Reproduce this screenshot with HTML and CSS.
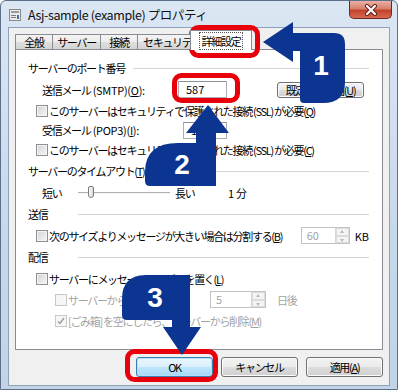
FILE: index.html
```html
<!DOCTYPE html>
<html lang="ja">
<head>
    <meta charset="UTF-8">
    <meta name="viewport" content="width=device-width, initial-scale=1.0">
    <title>Asj-sample (example) プロパティ</title>
    <link rel="stylesheet" href="styles.css">
</head>
<body>
    <div class="window">
        <div class="titlebar">
            <svg class="app-icon" width="14" height="14" viewBox="0 0 14 14">
                <rect x="1.5" y="1.5" width="11" height="11" fill="#e9e9e9" stroke="#8a8a8a"/>
                <rect x="3" y="3" width="8" height="2" fill="#9a9a9a"/>
                <rect x="3" y="7" width="5" height="1" fill="#7a7a7a"/>
                <rect x="3" y="9" width="5" height="1" fill="#7a7a7a"/>
                <rect x="9" y="7" width="2" height="4" fill="#4d6f96"/>
            </svg>
            <span class="title">Asj-sample (example) プロパティ</span>
            <div class="close">
                <svg width="14" height="12" viewBox="0 0 14 12">
                    <path d="M3 2 L11 10 M11 2 L3 10" stroke="#5a1c14" stroke-width="4" stroke-linecap="round"/>
                    <path d="M3 2 L11 10 M11 2 L3 10" stroke="#fff" stroke-width="2.2" stroke-linecap="round"/>
                </svg>
            </div>
        </div>

        <div class="client">
            <div class="tabs">
                <div class="tab w-general">全般</div>
                <div class="tab w-server">サーバー</div>
                <div class="tab w-conn">接続</div>
                <div class="tab w-sec">セキュリティ</div>
                <div class="tab active"><span class="focus">詳細設定</span></div>
            </div>

            <div class="panel">
                <div class="group-title"><span>サーバーのポート番号</span></div>
                <div class="row indent">
                    <span class="smtp-label">送信メール<span class="lat"> (SMTP)(<u>O</u>):</span></span>
                    <span class="textbox smtp">587</span>
                    <span class="btn small">既定値を使用(<u>U</u>)</span>
                </div>
                <div class="row check-row">
                    <span class="check"></span>
                    <span>このサーバーはセキュリティで保護された接続 (SSL) が必要(<u>Q</u>)</span>
                </div>
                <div class="row short indent">
                    <span class="pop-label">受信メール<span class="lat"> (POP3)(<u>I</u>):</span></span>
                    <span class="textbox pop">110</span>
                </div>
                <div class="row check-row">
                    <span class="check"></span>
                    <span>このサーバーはセキュリティで保護された接続 (SSL) が必要(<u>C</u>)</span>
                </div>

                <div class="group-title"><span>サーバーのタイムアウト(<u>T</u>)</span></div>
                <div class="row indent">
                    <span class="short-label">短い</span>
                    <div class="slider"><span class="thumb"></span></div>
                    <span class="long-label">長い</span>
                    <span><span class="lat">1 </span>分</span>
                </div>

                <div class="group-title"><span>送信</span></div>
                <div class="row check-row">
                    <span class="check"></span>
                    <span>次のサイズよりメッセージが大きい場合は分割する(<u>B</u>)</span>
                    <div class="spin split">
                        <span class="spin-value">60</span>
                        <span class="spin-btns"><i class="up"></i><i class="down"></i></span>
                    </div>
                    <span class="unit">KB</span>
                </div>

                <div class="group-title"><span>配信</span></div>
                <div class="row check-row">
                    <span class="check"></span>
                    <span>サーバーにメッセージのコピーを置く(<u>L</u>)</span>
                </div>
                <div class="row sub disabled">
                    <span class="check"></span>
                    <span class="delete-label">サーバーから削除する(<u>R</u>)</span>
                    <div class="spin days">
                        <span class="spin-value">5</span>
                        <span class="spin-btns"><i class="up"></i><i class="down"></i></span>
                    </div>
                    <span class="days-label">日後</span>
                </div>
                <div class="row sub disabled">
                    <span class="check checked">
                        <svg width="8" height="8" viewBox="0 0 8 8"><path d="M1 4.5 L3 6.5 L7 1" fill="none" stroke="#9c9c9c" stroke-width="1.4"/></svg>
                    </span>
                    <span>[ごみ箱] を空にしたら、サーバーから削除(<u>M</u>)</span>
                </div>
            </div>

            <div class="actions">
                <span class="btn default">OK</span>
                <span class="btn">キャンセル</span>
                <span class="btn">適用(<u>A</u>)</span>
            </div>
        </div>

        <svg class="callouts" width="398" height="390" viewBox="0 0 398 390">
            <g fill="none" stroke="#e8000b" stroke-width="5">
                <rect x="191.5" y="27.5" width="66" height="28" rx="7"/>
                <rect x="174.5" y="75.5" width="63" height="25" rx="7"/>
                <rect x="127.5" y="351.5" width="88" height="28" rx="7"/>
            </g>
            <g fill="#0b3590">
                <path d="M263 42 L293 22 L293 33 L334 33 Q345 33 345 44 L345 82 Q345 103 323 103 L304 103 Q300 103 300 99 L300 51 L293 51 L293 62 Z"/>
                <path d="M208 105 L229 133 L216 133 L216 186 L150 186 Q145 186 145 181 L145 172 Q145 143 178 143 L196 143 L196 133 L186 133 Z"/>
                <path d="M182 355 L163 327 L172 327 L172 320 L127 320 Q122 320 122 315 L122 299 Q122 275 146 275 L190 275 L190 327 L201 327 Z"/>
            </g>
            <g class="num" fill="#fff" text-anchor="middle">
                <text x="321" y="75">1</text>
                <text x="182" y="174">2</text>
                <text x="155" y="307">3</text>
            </g>
        </svg>
    </div>
</body>
</html>
```

FILE: styles.css
```css
body {
    margin: 0;
    font-family: "Noto Sans CJK JP", sans-serif;
    font-size: 11px;
    letter-spacing: -1.3px;
    color: #000;
}
u {
    text-decoration-thickness: 1px;
    text-underline-offset: 1px;
}
.lat {
    letter-spacing: -0.3px;
}
.window {
    position: relative;
    width: 398px;
    height: 390px;
    box-sizing: border-box;
    border: 1px solid #5d7089;
    border-radius: 6px 6px 0 0;
    background: linear-gradient(#dbe6f3, #c8d8eb 60%, #c2d3e8);
    padding: 0 7px 3px 7px;
    display: flex;
    flex-direction: column;
}
.titlebar {
    height: 26px;
    display: flex;
    align-items: center;
}
.app-icon {
    flex: none;
    margin-top: 1px;
}
.title {
    margin-left: 6px;
    font-size: 12.5px;
    letter-spacing: -0.4px;
    color: #111;
}
.close {
    margin-left: auto;
    margin-right: -2px;
    align-self: flex-start;
    width: 43px;
    height: 18px;
    box-sizing: border-box;
    border: 1px solid #6d2a20;
    border-top: none;
    border-radius: 0 0 5px 5px;
    background: linear-gradient(#eab1a5, #d8806d 45%, #c2432d 55%, #d8694f);
    display: flex;
    align-items: center;
    justify-content: center;
}
.client {
    flex: 1;
    background: #f0f0f0;
    border: 1px solid #8da1b9;
    padding: 6px 6px 0 6px;
}
.tabs {
    display: flex;
    align-items: flex-end;
    height: 15px;
    position: relative;
    z-index: 1;
}
.tab {
    height: 15px;
    box-sizing: border-box;
    border: 1px solid #898c95;
    border-bottom: none;
    background: linear-gradient(#f4f4f4, #ececec 50%, #dedede 50%, #d4d4d4);
    text-align: center;
    line-height: 14px;
    overflow: hidden;
    white-space: nowrap;
}
.w-general { width: 38px; }
.w-server { width: 49px; margin-left: -1px; }
.w-conn { width: 38px; margin-left: -1px; }
.w-sec { width: 56px; margin-left: -1px; text-align: left; padding-left: 5px; }
.tab.active {
    width: 62px;
    height: 20px;
    margin-left: -3px;
    margin-bottom: -1px;
    background: #fff;
    line-height: 18px;
    padding-top: 1px;
}
.focus {
    border: 1px dotted #555;
    padding: 0 2px;
}
.panel {
    height: 301px;
    box-sizing: border-box;
    border: 1px solid #898c95;
    background: #fff;
    padding: 7px 13px 0 12px;
}
.group-title {
    height: 22px;
    display: flex;
    align-items: center;
}
.group-title span {
    min-width: 42px;
    margin-right: 8px;
}
.group-title::after {
    content: "";
    flex: 1;
    border-top: 1px solid #d5d5d5;
    margin-top: 1px;
}
.row {
    display: flex;
    align-items: center;
    height: 21px;
    white-space: nowrap;
}
.row.short { height: 18px; }
.indent { padding-left: 14px; }
.check-row { padding-left: 8px; }
.sub { padding-left: 27px; }
.disabled { color: #a3a3a3; }
.check {
    flex: none;
    width: 12px;
    height: 12px;
    box-sizing: border-box;
    border: 1px solid #8e8f8f;
    background: linear-gradient(135deg, #cfd3d8, #f7f7f7);
    box-shadow: inset 0 0 0 1px #f4f4f4;
    margin-right: 1px;
    display: flex;
    align-items: center;
    justify-content: center;
}
.disabled .check {
    border-color: #c9c9c9;
    background: #f6f6f6;
    box-shadow: none;
}
.smtp-label { width: 136px; }
.pop-label { width: 141px; }
.textbox {
    height: 17px;
    box-sizing: border-box;
    border: 1px solid #abadb3;
    border-top-color: #8e9096;
    background: #fff;
    padding-left: 7px;
    line-height: 15px;
    letter-spacing: 0;
}
.smtp { width: 49px; }
.pop { width: 44px; }
.btn {
    height: 20px;
    width: 77px;
    box-sizing: border-box;
    border: 1px solid #707070;
    border-radius: 3px;
    background: linear-gradient(#f2f2f2, #ebebeb 50%, #dddddd 50%, #cfcfcf);
    display: flex;
    align-items: center;
    justify-content: center;
    box-shadow: inset 0 0 0 1px #fcfcfc;
}
.btn.small {
    width: 87px;
    height: 16px;
    margin-left: 50px;
}
.btn.default {
    border-color: #3c7fb1;
    background: linear-gradient(#eaf6fd, #d9f0fc 50%, #bee6fd 50%, #a7d9f5);
    box-shadow: inset 0 0 0 1px #b2e0fb;
}
.short-label { width: 36px; }
.slider {
    position: relative;
    width: 92px;
    height: 16px;
}
.slider::before {
    content: "";
    position: absolute;
    left: 0;
    right: 0;
    top: 7px;
    border-top: 1px solid #b1b1b1;
    border-bottom: 1px solid #f4f4f4;
}
.thumb {
    position: absolute;
    left: 10px;
    top: 1px;
    width: 6px;
    height: 12px;
    box-sizing: border-box;
    border: 1px solid #7b7b7b;
    border-radius: 2px 2px 3px 3px;
    background: linear-gradient(90deg, #f7f7f7, #dcdcdc);
}
.long-label {
    margin-left: 5px;
    width: 53px;
}
.spin {
    height: 17px;
    box-sizing: border-box;
    border: 1px solid #c2c2c2;
    background: #fff;
    display: flex;
    color: #a3a3a3;
    letter-spacing: 0;
}
.spin-value {
    flex: 1;
    padding-left: 5px;
    line-height: 15px;
}
.spin-btns {
    width: 13px;
    display: flex;
    flex-direction: column;
    border-left: 1px solid #d6d6d6;
}
.spin-btns i {
    flex: 1;
    background: #f4f4f4;
    border: 1px solid #dcdcdc;
    position: relative;
}
.spin-btns i::after {
    content: "";
    position: absolute;
    left: 3px;
    top: 2px;
    border: 2px solid transparent;
}
.spin-btns .up::after { border-bottom: 3px solid #b9b9b9; top: -1px; }
.spin-btns .down::after { border-top: 3px solid #b9b9b9; }
.split {
    width: 49px;
    margin-left: auto;
}
.unit {
    margin-left: 5px;
    letter-spacing: 0;
}
.delete-label { width: 142px; }
.days { width: 56px; }
.days-label { margin-left: 11px; }
.actions {
    display: flex;
    justify-content: flex-end;
    gap: 8px;
    padding-top: 7px;
}
.callouts {
    position: absolute;
    left: -1px;
    top: -1px;
    pointer-events: none;
}
.num {
    font-family: "Liberation Sans", Arial, sans-serif;
    font-size: 28px;
    font-weight: bold;
    letter-spacing: 0;
}
```
